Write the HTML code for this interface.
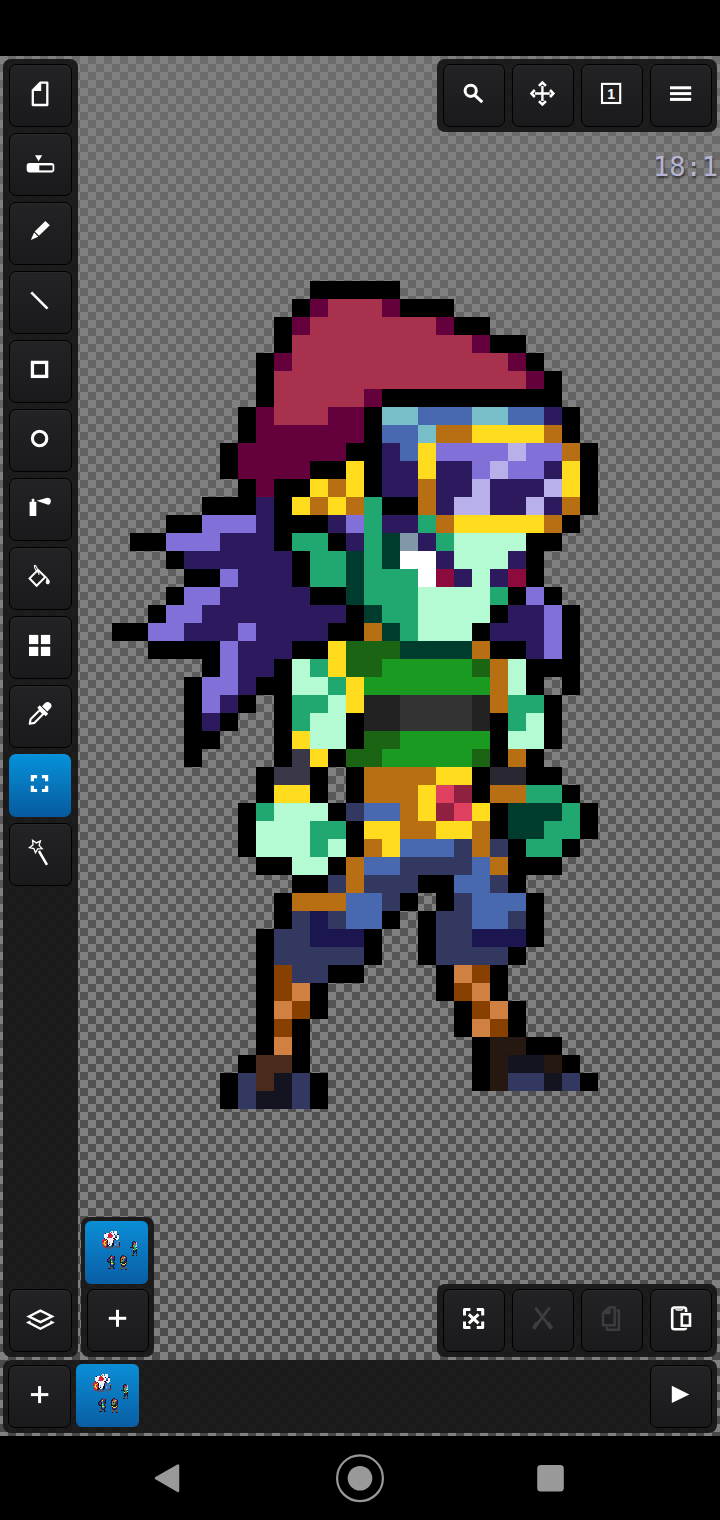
<!DOCTYPE html>
<html lang="en">
<head>
<meta charset="utf-8">
<title>Pixel editor</title>
<style>
html,body{margin:0;padding:0;background:#000;}
body{width:720px;height:1520px;position:relative;overflow:hidden;font-family:"Liberation Sans",sans-serif;}
.canvas{position:absolute;left:0;top:56px;width:720px;height:1380px;
  background:repeating-conic-gradient(transparent 0% 25%, #808080 0% 50%) 0 0/16px 16px, linear-gradient(#6c6c6c,#494949);}
.sprite{position:absolute;left:0;top:0;}
.panel{position:absolute;background:rgba(23,23,24,.95);border-radius:8px;}
.btn{position:absolute;width:61px;height:61px;border:1px solid #000;border-radius:7px;
  background:linear-gradient(#232325,#1a1a1c);box-shadow:inset 0 1px 0 rgba(255,255,255,.03);}
.btn.sel{background:linear-gradient(#0692da,#075a9e);border:0;}
.thumb{position:absolute;border-radius:6px;background:linear-gradient(#0a8ed6,#0a5ea4);}
.ico{position:absolute;left:0;top:0;}
.zoomtxt{position:absolute;left:653px;top:152px;font-family:"DejaVu Sans Mono","Liberation Mono",monospace;font-size:27px;line-height:30px;color:#b4b4d6;
  text-shadow:1px 2px 2px rgba(0,0,0,.55);white-space:nowrap;letter-spacing:0;}
.nav{position:absolute;left:0;top:1436px;width:720px;height:84px;background:#000;}
</style>
</head>
<body>
<div class="canvas"></div>
<svg class="sprite" width="720" height="1520" viewBox="0 0 720 1520" shape-rendering="crispEdges"><rect x="310" y="281" width="90" height="18" fill="#000000"/><rect x="292" y="299" width="18" height="18" fill="#000000"/><rect x="310" y="299" width="18" height="18" fill="#64003C"/><rect x="328" y="299" width="54" height="18" fill="#A8324E"/><rect x="382" y="299" width="18" height="18" fill="#64003C"/><rect x="400" y="299" width="54" height="18" fill="#000000"/><rect x="274" y="317" width="18" height="18" fill="#000000"/><rect x="292" y="317" width="18" height="18" fill="#64003C"/><rect x="310" y="317" width="126" height="18" fill="#A8324E"/><rect x="436" y="317" width="18" height="18" fill="#64003C"/><rect x="454" y="317" width="36" height="18" fill="#000000"/><rect x="274" y="335" width="18" height="18" fill="#000000"/><rect x="292" y="335" width="180" height="18" fill="#A8324E"/><rect x="472" y="335" width="18" height="18" fill="#64003C"/><rect x="490" y="335" width="36" height="18" fill="#000000"/><rect x="256" y="353" width="18" height="18" fill="#000000"/><rect x="274" y="353" width="18" height="18" fill="#64003C"/><rect x="292" y="353" width="216" height="18" fill="#A8324E"/><rect x="508" y="353" width="18" height="18" fill="#64003C"/><rect x="526" y="353" width="18" height="18" fill="#000000"/><rect x="256" y="371" width="18" height="18" fill="#000000"/><rect x="274" y="371" width="252" height="18" fill="#A8324E"/><rect x="526" y="371" width="18" height="18" fill="#64003C"/><rect x="544" y="371" width="18" height="18" fill="#000000"/><rect x="256" y="389" width="18" height="18" fill="#000000"/><rect x="274" y="389" width="90" height="18" fill="#A8324E"/><rect x="364" y="389" width="18" height="18" fill="#64003C"/><rect x="382" y="389" width="180" height="18" fill="#000000"/><rect x="238" y="407" width="18" height="18" fill="#000000"/><rect x="256" y="407" width="18" height="18" fill="#64003C"/><rect x="274" y="407" width="54" height="18" fill="#A8324E"/><rect x="328" y="407" width="36" height="18" fill="#64003C"/><rect x="364" y="407" width="18" height="18" fill="#000000"/><rect x="382" y="407" width="36" height="18" fill="#78BEC8"/><rect x="418" y="407" width="54" height="18" fill="#4868B0"/><rect x="472" y="407" width="36" height="18" fill="#78BEC8"/><rect x="508" y="407" width="36" height="18" fill="#4868B0"/><rect x="544" y="407" width="18" height="18" fill="#2D1A5E"/><rect x="562" y="407" width="18" height="18" fill="#000000"/><rect x="238" y="425" width="18" height="18" fill="#000000"/><rect x="256" y="425" width="108" height="18" fill="#64003C"/><rect x="364" y="425" width="18" height="18" fill="#000000"/><rect x="382" y="425" width="36" height="18" fill="#4868B0"/><rect x="418" y="425" width="18" height="18" fill="#78BEC8"/><rect x="436" y="425" width="36" height="18" fill="#B86F14"/><rect x="472" y="425" width="72" height="18" fill="#FFDC1E"/><rect x="544" y="425" width="18" height="18" fill="#B86F14"/><rect x="562" y="425" width="18" height="18" fill="#000000"/><rect x="220" y="443" width="18" height="18" fill="#000000"/><rect x="238" y="443" width="108" height="18" fill="#64003C"/><rect x="346" y="443" width="36" height="18" fill="#000000"/><rect x="382" y="443" width="18" height="18" fill="#2D1A5E"/><rect x="400" y="443" width="18" height="18" fill="#4868B0"/><rect x="418" y="443" width="18" height="18" fill="#FFDC1E"/><rect x="436" y="443" width="72" height="18" fill="#8070D8"/><rect x="508" y="443" width="18" height="18" fill="#B8B0E8"/><rect x="526" y="443" width="36" height="18" fill="#8070D8"/><rect x="562" y="443" width="18" height="18" fill="#B86F14"/><rect x="580" y="443" width="18" height="18" fill="#000000"/><rect x="220" y="461" width="18" height="18" fill="#000000"/><rect x="238" y="461" width="72" height="18" fill="#64003C"/><rect x="310" y="461" width="36" height="18" fill="#000000"/><rect x="346" y="461" width="18" height="18" fill="#FFDC1E"/><rect x="364" y="461" width="18" height="18" fill="#000000"/><rect x="382" y="461" width="36" height="18" fill="#2D1A5E"/><rect x="418" y="461" width="18" height="18" fill="#FFDC1E"/><rect x="436" y="461" width="36" height="18" fill="#2D1A5E"/><rect x="472" y="461" width="18" height="18" fill="#8070D8"/><rect x="490" y="461" width="18" height="18" fill="#B8B0E8"/><rect x="508" y="461" width="36" height="18" fill="#8070D8"/><rect x="544" y="461" width="18" height="18" fill="#2D1A5E"/><rect x="562" y="461" width="18" height="18" fill="#FFDC1E"/><rect x="580" y="461" width="18" height="18" fill="#000000"/><rect x="238" y="479" width="18" height="18" fill="#000000"/><rect x="256" y="479" width="18" height="18" fill="#64003C"/><rect x="274" y="479" width="36" height="18" fill="#000000"/><rect x="310" y="479" width="18" height="18" fill="#FFDC1E"/><rect x="328" y="479" width="18" height="18" fill="#B86F14"/><rect x="346" y="479" width="18" height="18" fill="#FFDC1E"/><rect x="364" y="479" width="18" height="18" fill="#000000"/><rect x="382" y="479" width="36" height="18" fill="#2D1A5E"/><rect x="418" y="479" width="18" height="18" fill="#B86F14"/><rect x="436" y="479" width="36" height="18" fill="#2D1A5E"/><rect x="472" y="479" width="18" height="18" fill="#B8B0E8"/><rect x="490" y="479" width="54" height="18" fill="#2D1A5E"/><rect x="544" y="479" width="18" height="18" fill="#B8B0E8"/><rect x="562" y="479" width="18" height="18" fill="#FFDC1E"/><rect x="580" y="479" width="18" height="18" fill="#000000"/><rect x="202" y="497" width="54" height="18" fill="#000000"/><rect x="256" y="497" width="18" height="18" fill="#2D1A5E"/><rect x="274" y="497" width="18" height="18" fill="#000000"/><rect x="292" y="497" width="18" height="18" fill="#FFDC1E"/><rect x="310" y="497" width="18" height="18" fill="#B86F14"/><rect x="328" y="497" width="18" height="18" fill="#FFDC1E"/><rect x="346" y="497" width="18" height="18" fill="#B86F14"/><rect x="364" y="497" width="18" height="18" fill="#20A870"/><rect x="382" y="497" width="36" height="18" fill="#000000"/><rect x="418" y="497" width="18" height="18" fill="#B86F14"/><rect x="436" y="497" width="18" height="18" fill="#2D1A5E"/><rect x="454" y="497" width="36" height="18" fill="#B8B0E8"/><rect x="490" y="497" width="36" height="18" fill="#2D1A5E"/><rect x="526" y="497" width="18" height="18" fill="#B8B0E8"/><rect x="544" y="497" width="18" height="18" fill="#2D1A5E"/><rect x="562" y="497" width="18" height="18" fill="#B86F14"/><rect x="580" y="497" width="18" height="18" fill="#000000"/><rect x="166" y="515" width="36" height="18" fill="#000000"/><rect x="202" y="515" width="54" height="18" fill="#8070D8"/><rect x="256" y="515" width="18" height="18" fill="#2D1A5E"/><rect x="274" y="515" width="54" height="18" fill="#000000"/><rect x="328" y="515" width="18" height="18" fill="#2D1A5E"/><rect x="346" y="515" width="18" height="18" fill="#8070D8"/><rect x="364" y="515" width="18" height="18" fill="#20A870"/><rect x="382" y="515" width="36" height="18" fill="#2D1A5E"/><rect x="418" y="515" width="18" height="18" fill="#20A870"/><rect x="436" y="515" width="18" height="18" fill="#B86F14"/><rect x="454" y="515" width="90" height="18" fill="#FFDC1E"/><rect x="544" y="515" width="18" height="18" fill="#B86F14"/><rect x="562" y="515" width="18" height="18" fill="#000000"/><rect x="130" y="533" width="36" height="18" fill="#000000"/><rect x="166" y="533" width="54" height="18" fill="#8070D8"/><rect x="220" y="533" width="54" height="18" fill="#2D1A5E"/><rect x="274" y="533" width="18" height="18" fill="#000000"/><rect x="292" y="533" width="36" height="18" fill="#20A870"/><rect x="328" y="533" width="18" height="18" fill="#000000"/><rect x="346" y="533" width="18" height="18" fill="#2D1A5E"/><rect x="364" y="533" width="18" height="18" fill="#20A870"/><rect x="382" y="533" width="18" height="18" fill="#003C2D"/><rect x="400" y="533" width="18" height="18" fill="#8098A8"/><rect x="418" y="533" width="18" height="18" fill="#2D1A5E"/><rect x="436" y="533" width="18" height="18" fill="#20A870"/><rect x="454" y="533" width="72" height="18" fill="#B4FAD2"/><rect x="526" y="533" width="36" height="18" fill="#000000"/><rect x="166" y="551" width="18" height="18" fill="#000000"/><rect x="184" y="551" width="108" height="18" fill="#2D1A5E"/><rect x="292" y="551" width="18" height="18" fill="#000000"/><rect x="310" y="551" width="36" height="18" fill="#20A870"/><rect x="346" y="551" width="18" height="18" fill="#003C2D"/><rect x="364" y="551" width="18" height="18" fill="#20A870"/><rect x="382" y="551" width="18" height="18" fill="#003C2D"/><rect x="400" y="551" width="36" height="18" fill="#FFFFFF"/><rect x="436" y="551" width="18" height="18" fill="#2D1A5E"/><rect x="454" y="551" width="54" height="18" fill="#B4FAD2"/><rect x="508" y="551" width="18" height="18" fill="#2D1A5E"/><rect x="526" y="551" width="18" height="18" fill="#000000"/><rect x="184" y="569" width="36" height="18" fill="#000000"/><rect x="220" y="569" width="18" height="18" fill="#8070D8"/><rect x="238" y="569" width="54" height="18" fill="#2D1A5E"/><rect x="292" y="569" width="18" height="18" fill="#000000"/><rect x="310" y="569" width="36" height="18" fill="#20A870"/><rect x="346" y="569" width="18" height="18" fill="#003C2D"/><rect x="364" y="569" width="54" height="18" fill="#20A870"/><rect x="418" y="569" width="18" height="18" fill="#FFFFFF"/><rect x="436" y="569" width="18" height="18" fill="#8C0A3C"/><rect x="454" y="569" width="18" height="18" fill="#2D1A5E"/><rect x="472" y="569" width="18" height="18" fill="#B4FAD2"/><rect x="490" y="569" width="18" height="18" fill="#2D1A5E"/><rect x="508" y="569" width="18" height="18" fill="#8C0A3C"/><rect x="526" y="569" width="18" height="18" fill="#000000"/><rect x="166" y="587" width="18" height="18" fill="#000000"/><rect x="184" y="587" width="36" height="18" fill="#8070D8"/><rect x="220" y="587" width="90" height="18" fill="#2D1A5E"/><rect x="310" y="587" width="36" height="18" fill="#000000"/><rect x="346" y="587" width="18" height="18" fill="#003C2D"/><rect x="364" y="587" width="54" height="18" fill="#20A870"/><rect x="418" y="587" width="72" height="18" fill="#B4FAD2"/><rect x="490" y="587" width="18" height="18" fill="#20A870"/><rect x="508" y="587" width="18" height="18" fill="#000000"/><rect x="526" y="587" width="18" height="18" fill="#8070D8"/><rect x="544" y="587" width="18" height="18" fill="#000000"/><rect x="148" y="605" width="18" height="18" fill="#000000"/><rect x="166" y="605" width="36" height="18" fill="#8070D8"/><rect x="202" y="605" width="144" height="18" fill="#2D1A5E"/><rect x="346" y="605" width="18" height="18" fill="#000000"/><rect x="364" y="605" width="18" height="18" fill="#003C2D"/><rect x="382" y="605" width="36" height="18" fill="#20A870"/><rect x="418" y="605" width="72" height="18" fill="#B4FAD2"/><rect x="490" y="605" width="18" height="18" fill="#000000"/><rect x="508" y="605" width="36" height="18" fill="#2D1A5E"/><rect x="544" y="605" width="18" height="18" fill="#8070D8"/><rect x="562" y="605" width="18" height="18" fill="#000000"/><rect x="112" y="623" width="36" height="18" fill="#000000"/><rect x="148" y="623" width="36" height="18" fill="#8070D8"/><rect x="184" y="623" width="54" height="18" fill="#2D1A5E"/><rect x="238" y="623" width="18" height="18" fill="#8070D8"/><rect x="256" y="623" width="72" height="18" fill="#2D1A5E"/><rect x="328" y="623" width="36" height="18" fill="#000000"/><rect x="364" y="623" width="18" height="18" fill="#B86F14"/><rect x="382" y="623" width="18" height="18" fill="#003C2D"/><rect x="400" y="623" width="18" height="18" fill="#20A870"/><rect x="418" y="623" width="54" height="18" fill="#B4FAD2"/><rect x="472" y="623" width="18" height="18" fill="#000000"/><rect x="490" y="623" width="54" height="18" fill="#2D1A5E"/><rect x="544" y="623" width="18" height="18" fill="#8070D8"/><rect x="562" y="623" width="18" height="18" fill="#000000"/><rect x="148" y="641" width="72" height="18" fill="#000000"/><rect x="220" y="641" width="18" height="18" fill="#8070D8"/><rect x="238" y="641" width="54" height="18" fill="#2D1A5E"/><rect x="292" y="641" width="36" height="18" fill="#000000"/><rect x="328" y="641" width="18" height="18" fill="#FFDC1E"/><rect x="346" y="641" width="54" height="18" fill="#1A6414"/><rect x="400" y="641" width="72" height="18" fill="#003C2D"/><rect x="472" y="641" width="18" height="18" fill="#B86F14"/><rect x="490" y="641" width="36" height="18" fill="#000000"/><rect x="526" y="641" width="18" height="18" fill="#2D1A5E"/><rect x="544" y="641" width="18" height="18" fill="#8070D8"/><rect x="562" y="641" width="18" height="18" fill="#000000"/><rect x="202" y="659" width="18" height="18" fill="#000000"/><rect x="220" y="659" width="18" height="18" fill="#8070D8"/><rect x="238" y="659" width="36" height="18" fill="#2D1A5E"/><rect x="274" y="659" width="18" height="18" fill="#000000"/><rect x="292" y="659" width="18" height="18" fill="#B4FAD2"/><rect x="310" y="659" width="18" height="18" fill="#20A870"/><rect x="328" y="659" width="18" height="18" fill="#FFDC1E"/><rect x="346" y="659" width="36" height="18" fill="#1A6414"/><rect x="382" y="659" width="90" height="18" fill="#1A9A20"/><rect x="472" y="659" width="18" height="18" fill="#1A6414"/><rect x="490" y="659" width="18" height="18" fill="#B86F14"/><rect x="508" y="659" width="18" height="18" fill="#B4FAD2"/><rect x="526" y="659" width="54" height="18" fill="#000000"/><rect x="184" y="677" width="18" height="18" fill="#000000"/><rect x="202" y="677" width="36" height="18" fill="#8070D8"/><rect x="238" y="677" width="18" height="18" fill="#2D1A5E"/><rect x="256" y="677" width="36" height="18" fill="#000000"/><rect x="292" y="677" width="36" height="18" fill="#B4FAD2"/><rect x="328" y="677" width="18" height="18" fill="#20A870"/><rect x="346" y="677" width="18" height="18" fill="#FFDC1E"/><rect x="364" y="677" width="126" height="18" fill="#1A9A20"/><rect x="490" y="677" width="18" height="18" fill="#B86F14"/><rect x="508" y="677" width="18" height="18" fill="#B4FAD2"/><rect x="526" y="677" width="18" height="18" fill="#000000"/><rect x="562" y="677" width="18" height="18" fill="#000000"/><rect x="184" y="695" width="18" height="18" fill="#000000"/><rect x="202" y="695" width="18" height="18" fill="#8070D8"/><rect x="220" y="695" width="18" height="18" fill="#2D1A5E"/><rect x="238" y="695" width="18" height="18" fill="#000000"/><rect x="274" y="695" width="18" height="18" fill="#000000"/><rect x="292" y="695" width="36" height="18" fill="#20A870"/><rect x="328" y="695" width="18" height="18" fill="#B4FAD2"/><rect x="346" y="695" width="18" height="18" fill="#FFDC1E"/><rect x="364" y="695" width="36" height="18" fill="#222222"/><rect x="400" y="695" width="72" height="18" fill="#333333"/><rect x="472" y="695" width="18" height="18" fill="#222222"/><rect x="490" y="695" width="18" height="18" fill="#B86F14"/><rect x="508" y="695" width="36" height="18" fill="#20A870"/><rect x="544" y="695" width="18" height="18" fill="#000000"/><rect x="184" y="713" width="18" height="18" fill="#000000"/><rect x="202" y="713" width="18" height="18" fill="#2D1A5E"/><rect x="220" y="713" width="18" height="18" fill="#000000"/><rect x="274" y="713" width="18" height="18" fill="#000000"/><rect x="292" y="713" width="18" height="18" fill="#20A870"/><rect x="310" y="713" width="36" height="18" fill="#B4FAD2"/><rect x="346" y="713" width="18" height="18" fill="#000000"/><rect x="364" y="713" width="36" height="18" fill="#222222"/><rect x="400" y="713" width="72" height="18" fill="#333333"/><rect x="472" y="713" width="18" height="18" fill="#222222"/><rect x="490" y="713" width="18" height="18" fill="#000000"/><rect x="508" y="713" width="18" height="18" fill="#20A870"/><rect x="526" y="713" width="18" height="18" fill="#B4FAD2"/><rect x="544" y="713" width="18" height="18" fill="#000000"/><rect x="184" y="731" width="36" height="18" fill="#000000"/><rect x="274" y="731" width="18" height="18" fill="#000000"/><rect x="292" y="731" width="18" height="18" fill="#FFDC1E"/><rect x="310" y="731" width="36" height="18" fill="#B4FAD2"/><rect x="346" y="731" width="18" height="18" fill="#000000"/><rect x="364" y="731" width="36" height="18" fill="#1A6414"/><rect x="400" y="731" width="90" height="18" fill="#1A9A20"/><rect x="490" y="731" width="18" height="18" fill="#000000"/><rect x="508" y="731" width="36" height="18" fill="#B4FAD2"/><rect x="544" y="731" width="18" height="18" fill="#000000"/><rect x="184" y="749" width="18" height="18" fill="#000000"/><rect x="274" y="749" width="18" height="18" fill="#000000"/><rect x="292" y="749" width="18" height="18" fill="#3A3848"/><rect x="310" y="749" width="18" height="18" fill="#FFDC1E"/><rect x="328" y="749" width="18" height="18" fill="#000000"/><rect x="346" y="749" width="36" height="18" fill="#1A6414"/><rect x="382" y="749" width="90" height="18" fill="#1A9A20"/><rect x="472" y="749" width="18" height="18" fill="#1A6414"/><rect x="490" y="749" width="18" height="18" fill="#000000"/><rect x="508" y="749" width="18" height="18" fill="#B86F14"/><rect x="526" y="749" width="18" height="18" fill="#000000"/><rect x="256" y="767" width="18" height="18" fill="#000000"/><rect x="274" y="767" width="36" height="18" fill="#3A3848"/><rect x="310" y="767" width="18" height="18" fill="#000000"/><rect x="346" y="767" width="18" height="18" fill="#000000"/><rect x="364" y="767" width="72" height="18" fill="#B86F14"/><rect x="436" y="767" width="36" height="18" fill="#FFDC1E"/><rect x="472" y="767" width="18" height="18" fill="#000000"/><rect x="490" y="767" width="36" height="18" fill="#282630"/><rect x="526" y="767" width="36" height="18" fill="#000000"/><rect x="256" y="785" width="18" height="18" fill="#000000"/><rect x="274" y="785" width="36" height="18" fill="#FFDC1E"/><rect x="310" y="785" width="18" height="18" fill="#000000"/><rect x="346" y="785" width="18" height="18" fill="#000000"/><rect x="364" y="785" width="54" height="18" fill="#B86F14"/><rect x="418" y="785" width="18" height="18" fill="#FFDC1E"/><rect x="436" y="785" width="18" height="18" fill="#E04060"/><rect x="454" y="785" width="18" height="18" fill="#902040"/><rect x="472" y="785" width="18" height="18" fill="#000000"/><rect x="490" y="785" width="36" height="18" fill="#B86F14"/><rect x="526" y="785" width="36" height="18" fill="#20A870"/><rect x="562" y="785" width="18" height="18" fill="#000000"/><rect x="238" y="803" width="18" height="18" fill="#000000"/><rect x="256" y="803" width="18" height="18" fill="#20A870"/><rect x="274" y="803" width="54" height="18" fill="#B4FAD2"/><rect x="328" y="803" width="18" height="18" fill="#000000"/><rect x="346" y="803" width="18" height="18" fill="#323860"/><rect x="364" y="803" width="36" height="18" fill="#4868B0"/><rect x="400" y="803" width="18" height="18" fill="#B86F14"/><rect x="418" y="803" width="18" height="18" fill="#FFDC1E"/><rect x="436" y="803" width="18" height="18" fill="#902040"/><rect x="454" y="803" width="18" height="18" fill="#E04060"/><rect x="472" y="803" width="18" height="18" fill="#FFDC1E"/><rect x="490" y="803" width="18" height="18" fill="#000000"/><rect x="508" y="803" width="54" height="18" fill="#003C2D"/><rect x="562" y="803" width="18" height="18" fill="#20A870"/><rect x="580" y="803" width="18" height="18" fill="#000000"/><rect x="238" y="821" width="18" height="18" fill="#000000"/><rect x="256" y="821" width="54" height="18" fill="#B4FAD2"/><rect x="310" y="821" width="36" height="18" fill="#20A870"/><rect x="346" y="821" width="18" height="18" fill="#000000"/><rect x="364" y="821" width="36" height="18" fill="#FFDC1E"/><rect x="400" y="821" width="36" height="18" fill="#B86F14"/><rect x="436" y="821" width="36" height="18" fill="#FFDC1E"/><rect x="472" y="821" width="18" height="18" fill="#B86F14"/><rect x="490" y="821" width="18" height="18" fill="#000000"/><rect x="508" y="821" width="36" height="18" fill="#003C2D"/><rect x="544" y="821" width="36" height="18" fill="#20A870"/><rect x="580" y="821" width="18" height="18" fill="#000000"/><rect x="238" y="839" width="18" height="18" fill="#000000"/><rect x="256" y="839" width="54" height="18" fill="#B4FAD2"/><rect x="310" y="839" width="18" height="18" fill="#20A870"/><rect x="328" y="839" width="18" height="18" fill="#B4FAD2"/><rect x="346" y="839" width="18" height="18" fill="#000000"/><rect x="364" y="839" width="18" height="18" fill="#B86F14"/><rect x="382" y="839" width="18" height="18" fill="#FFDC1E"/><rect x="400" y="839" width="54" height="18" fill="#4868B0"/><rect x="454" y="839" width="18" height="18" fill="#323860"/><rect x="472" y="839" width="18" height="18" fill="#B86F14"/><rect x="490" y="839" width="18" height="18" fill="#323860"/><rect x="508" y="839" width="18" height="18" fill="#000000"/><rect x="526" y="839" width="36" height="18" fill="#20A870"/><rect x="562" y="839" width="18" height="18" fill="#000000"/><rect x="256" y="857" width="36" height="18" fill="#000000"/><rect x="292" y="857" width="36" height="18" fill="#B4FAD2"/><rect x="328" y="857" width="18" height="18" fill="#000000"/><rect x="346" y="857" width="18" height="18" fill="#B86F14"/><rect x="364" y="857" width="36" height="18" fill="#4868B0"/><rect x="400" y="857" width="72" height="18" fill="#323860"/><rect x="472" y="857" width="18" height="18" fill="#4868B0"/><rect x="490" y="857" width="18" height="18" fill="#B86F14"/><rect x="508" y="857" width="54" height="18" fill="#000000"/><rect x="292" y="875" width="36" height="18" fill="#000000"/><rect x="328" y="875" width="18" height="18" fill="#323860"/><rect x="346" y="875" width="18" height="18" fill="#B86F14"/><rect x="364" y="875" width="54" height="18" fill="#323860"/><rect x="418" y="875" width="36" height="18" fill="#000000"/><rect x="454" y="875" width="36" height="18" fill="#4868B0"/><rect x="490" y="875" width="18" height="18" fill="#323860"/><rect x="508" y="875" width="18" height="18" fill="#000000"/><rect x="274" y="893" width="18" height="18" fill="#000000"/><rect x="292" y="893" width="54" height="18" fill="#B86F14"/><rect x="346" y="893" width="36" height="18" fill="#4868B0"/><rect x="382" y="893" width="18" height="18" fill="#323860"/><rect x="400" y="893" width="18" height="18" fill="#000000"/><rect x="436" y="893" width="18" height="18" fill="#000000"/><rect x="454" y="893" width="18" height="18" fill="#323860"/><rect x="472" y="893" width="54" height="18" fill="#4868B0"/><rect x="526" y="893" width="18" height="18" fill="#000000"/><rect x="274" y="911" width="18" height="18" fill="#000000"/><rect x="292" y="911" width="18" height="18" fill="#323860"/><rect x="310" y="911" width="18" height="18" fill="#1C1650"/><rect x="328" y="911" width="18" height="18" fill="#323860"/><rect x="346" y="911" width="36" height="18" fill="#4868B0"/><rect x="382" y="911" width="18" height="18" fill="#000000"/><rect x="418" y="911" width="18" height="18" fill="#000000"/><rect x="436" y="911" width="36" height="18" fill="#323860"/><rect x="472" y="911" width="36" height="18" fill="#4868B0"/><rect x="508" y="911" width="18" height="18" fill="#323860"/><rect x="526" y="911" width="18" height="18" fill="#000000"/><rect x="256" y="929" width="18" height="18" fill="#000000"/><rect x="274" y="929" width="36" height="18" fill="#323860"/><rect x="310" y="929" width="54" height="18" fill="#1C1650"/><rect x="364" y="929" width="18" height="18" fill="#000000"/><rect x="418" y="929" width="18" height="18" fill="#000000"/><rect x="436" y="929" width="36" height="18" fill="#323860"/><rect x="472" y="929" width="54" height="18" fill="#1C1650"/><rect x="526" y="929" width="18" height="18" fill="#000000"/><rect x="256" y="947" width="18" height="18" fill="#000000"/><rect x="274" y="947" width="90" height="18" fill="#323860"/><rect x="364" y="947" width="18" height="18" fill="#000000"/><rect x="418" y="947" width="18" height="18" fill="#000000"/><rect x="436" y="947" width="72" height="18" fill="#323860"/><rect x="508" y="947" width="18" height="18" fill="#000000"/><rect x="256" y="965" width="18" height="18" fill="#000000"/><rect x="274" y="965" width="18" height="18" fill="#884000"/><rect x="292" y="965" width="36" height="18" fill="#323860"/><rect x="328" y="965" width="36" height="18" fill="#000000"/><rect x="436" y="965" width="18" height="18" fill="#000000"/><rect x="454" y="965" width="18" height="18" fill="#D08040"/><rect x="472" y="965" width="18" height="18" fill="#884000"/><rect x="490" y="965" width="18" height="18" fill="#000000"/><rect x="256" y="983" width="18" height="18" fill="#000000"/><rect x="274" y="983" width="18" height="18" fill="#884000"/><rect x="292" y="983" width="18" height="18" fill="#D08040"/><rect x="310" y="983" width="18" height="18" fill="#000000"/><rect x="436" y="983" width="18" height="18" fill="#000000"/><rect x="454" y="983" width="18" height="18" fill="#884000"/><rect x="472" y="983" width="18" height="18" fill="#D08040"/><rect x="490" y="983" width="18" height="18" fill="#000000"/><rect x="256" y="1001" width="18" height="18" fill="#000000"/><rect x="274" y="1001" width="18" height="18" fill="#D08040"/><rect x="292" y="1001" width="18" height="18" fill="#884000"/><rect x="310" y="1001" width="18" height="18" fill="#000000"/><rect x="454" y="1001" width="18" height="18" fill="#000000"/><rect x="472" y="1001" width="18" height="18" fill="#884000"/><rect x="490" y="1001" width="18" height="18" fill="#D08040"/><rect x="508" y="1001" width="18" height="18" fill="#000000"/><rect x="256" y="1019" width="18" height="18" fill="#000000"/><rect x="274" y="1019" width="18" height="18" fill="#884000"/><rect x="292" y="1019" width="18" height="18" fill="#000000"/><rect x="454" y="1019" width="18" height="18" fill="#000000"/><rect x="472" y="1019" width="18" height="18" fill="#D08040"/><rect x="490" y="1019" width="18" height="18" fill="#884000"/><rect x="508" y="1019" width="18" height="18" fill="#000000"/><rect x="256" y="1037" width="18" height="18" fill="#000000"/><rect x="274" y="1037" width="18" height="18" fill="#D08040"/><rect x="292" y="1037" width="18" height="18" fill="#000000"/><rect x="472" y="1037" width="18" height="18" fill="#000000"/><rect x="490" y="1037" width="36" height="18" fill="#241810"/><rect x="526" y="1037" width="36" height="18" fill="#000000"/><rect x="238" y="1055" width="18" height="18" fill="#000000"/><rect x="256" y="1055" width="36" height="18" fill="#4A2A1A"/><rect x="292" y="1055" width="18" height="18" fill="#000000"/><rect x="472" y="1055" width="18" height="18" fill="#000000"/><rect x="490" y="1055" width="18" height="18" fill="#241810"/><rect x="508" y="1055" width="36" height="18" fill="#141420"/><rect x="544" y="1055" width="18" height="18" fill="#241810"/><rect x="562" y="1055" width="18" height="18" fill="#000000"/><rect x="220" y="1073" width="18" height="18" fill="#000000"/><rect x="238" y="1073" width="18" height="18" fill="#323860"/><rect x="256" y="1073" width="18" height="18" fill="#4A2A1A"/><rect x="274" y="1073" width="18" height="18" fill="#141420"/><rect x="292" y="1073" width="18" height="18" fill="#323860"/><rect x="310" y="1073" width="18" height="18" fill="#000000"/><rect x="472" y="1073" width="18" height="18" fill="#000000"/><rect x="490" y="1073" width="18" height="18" fill="#241810"/><rect x="508" y="1073" width="36" height="18" fill="#323860"/><rect x="544" y="1073" width="18" height="18" fill="#141420"/><rect x="562" y="1073" width="18" height="18" fill="#323860"/><rect x="580" y="1073" width="18" height="18" fill="#000000"/><rect x="220" y="1091" width="18" height="18" fill="#000000"/><rect x="238" y="1091" width="18" height="18" fill="#323860"/><rect x="256" y="1091" width="36" height="18" fill="#141420"/><rect x="292" y="1091" width="18" height="18" fill="#323860"/><rect x="310" y="1091" width="18" height="18" fill="#000000"/></svg>
<div class="zoomtxt">18:1</div>

<!-- left tool panel -->
<div class="panel" style="left:3px;top:59px;width:75px;height:1298px;"></div>
<!-- top right panel -->
<div class="panel" style="left:437px;top:59px;width:280px;height:72.7px;"></div>
<!-- bottom right panel -->
<div class="panel" style="left:437px;top:1284px;width:280px;height:73px;"></div>
<!-- layer panel -->
<div class="panel" style="left:81px;top:1217px;width:73px;height:140px;"></div>
<!-- bottom bar -->
<div class="panel" style="left:3px;top:1360px;width:714px;height:72.5px;"></div>

<div class="btn" style="left:9px;top:64px;width:60.5px;height:60.5px"></div>
<div class="btn" style="left:9px;top:133px;width:60.5px;height:60.5px"></div>
<div class="btn" style="left:9px;top:202px;width:60.5px;height:60.5px"></div>
<div class="btn" style="left:9px;top:271px;width:60.5px;height:60.5px"></div>
<div class="btn" style="left:9px;top:340px;width:60.5px;height:60.5px"></div>
<div class="btn" style="left:9px;top:409px;width:60.5px;height:60.5px"></div>
<div class="btn" style="left:9px;top:478px;width:60.5px;height:60.5px"></div>
<div class="btn" style="left:9px;top:547px;width:60.5px;height:60.5px"></div>
<div class="btn" style="left:9px;top:616px;width:60.5px;height:60.5px"></div>
<div class="btn" style="left:9px;top:685px;width:60.5px;height:60.5px"></div>
<div class="btn sel" style="left:8.5px;top:753.8px;width:62.8px;height:63px"></div>
<div class="btn" style="left:9px;top:823px;width:60.5px;height:60.5px"></div>
<div class="btn" style="left:9px;top:1289.3px;width:60.5px;height:60.5px"></div>
<div class="btn" style="left:442.5px;top:64px;width:60.5px;height:60.5px"></div>
<div class="btn" style="left:442.5px;top:1289.3px;width:60.5px;height:60.5px"></div>
<div class="btn" style="left:511.5px;top:64px;width:60.5px;height:60.5px"></div>
<div class="btn" style="left:511.5px;top:1289.3px;width:60.5px;height:60.5px"></div>
<div class="btn" style="left:580.5px;top:64px;width:60.5px;height:60.5px"></div>
<div class="btn" style="left:580.5px;top:1289.3px;width:60.5px;height:60.5px"></div>
<div class="btn" style="left:649.5px;top:64px;width:60.5px;height:60.5px"></div>
<div class="btn" style="left:649.5px;top:1289.3px;width:60.5px;height:60.5px"></div>
<div class="btn" style="left:86.5px;top:1289.3px;width:60.5px;height:60.5px"></div>
<div class="btn" style="left:8px;top:1365.2px;width:61px;height:60.5px"></div>
<div class="btn" style="left:649.5px;top:1365px;width:60.5px;height:60.5px"></div>
<div class="thumb" style="left:85px;top:1221px;width:63px;height:63px"></div>
<div class="thumb" style="left:76px;top:1363.7px;width:63.2px;height:63.8px"></div>

<svg class="ico" width="720" height="1520" viewBox="0 0 720 1520">
<path d="M32.8 90.2 L40.2 82.7 H47.3 V105 H32.8 Z" fill="none" stroke="#fff" stroke-width="2.3" stroke-linejoin="round"/>
<path d="M32.3 91 L41.2 82 V91 Z" fill="#fff"/>
<path d="M35 155.3 H42.2 L38.6 161.2 Z" fill="#fff"/>
<rect x="26.7" y="162.9" width="27.6" height="9.5" rx="2.8" fill="#fff"/>
<rect x="39.3" y="165.4" width="13.2" height="5" fill="#1d1d1f"/>
<path d="M45.4 220.9 L49.8 225.3 L39 235.8 L34.7 231.5 Z" fill="#fff"/>
<path d="M34.1 232.5 L38.2 236.7 L30.8 240 Z" fill="#fff"/>
<path d="M31.3 292.4 L47.5 308.7" stroke="#fff" stroke-width="2.6" fill="none"/>
<rect x="32.45" y="362.4" width="14.2" height="14" fill="none" stroke="#fff" stroke-width="3.3"/>
<circle cx="39.6" cy="438.5" r="7.2" fill="none" stroke="#fff" stroke-width="3.1"/>
<rect x="29.6" y="501.7" width="6.7" height="14.4" rx="0.6" fill="#fff"/>
<rect x="31.7" y="498.8" width="2.6" height="3.2" rx="0.8" fill="#fff"/>
<path d="M36.5 500.8 L47.2 497.7 Q51 497.6 50.8 501.3 Q50.4 504.8 48 504.8 Z" fill="#fff"/>
<path d="M29.6 578.4 L38 569.9 L45.3 577 L36.6 585.8 Z" fill="none" stroke="#fff" stroke-width="2" stroke-linejoin="miter"/>
<path d="M37.4 572.5 Q33.5 567 34.6 565.4 Q36.3 564.6 39.2 574.8" fill="none" stroke="#fff" stroke-width="1.1"/>
<path d="M45.3 576.8 L47 578.3" stroke="#fff" stroke-width="1.2"/>
<path d="M46.9 577.6 Q50.2 580.6 49.7 582 A2 2 0 1 1 46 581.2 Q46.2 579.5 46.9 577.6 Z" fill="#fff"/>
<rect x="29" y="634.9" width="9.3" height="9.2" fill="#fff"/>
<rect x="40.9" y="634.9" width="9.3" height="9.2" fill="#fff"/>
<rect x="29" y="646.8" width="9.3" height="9.2" fill="#fff"/>
<rect x="40.9" y="646.8" width="9.3" height="9.2" fill="#fff"/>
<g transform="translate(28.9 724.6) rotate(-45)"><path d="M1.2 0 L5 -2.6 H18 V2.6 H5 Z" fill="none" stroke="#fff" stroke-width="2.1" stroke-linejoin="round"/><rect x="17.8" y="-6" width="3.5" height="12" fill="#fff"/><path d="M22.3 -3.8 H26.4 A3.8 3.8 0 0 1 26.4 3.8 H22.3 Z" fill="#fff"/></g>
<path fill="#fff" d="M30.8 775 h6.3 v3.2 h-3.1 v3.1 h-3.2 Z"/>
<path fill="#fff" d="M48.2 775 h-6.3 v3.2 h3.1 v3.1 h3.2 Z"/>
<path fill="#fff" d="M30.8 792.1 h6.3 v-3.2 h-3.1 v-3.1 h-3.2 Z"/>
<path fill="#fff" d="M48.2 792.1 h-6.3 v-3.2 h3.1 v-3.1 h3.2 Z"/>
<polygon points="32.55,840.36 36.28,842.91 40.40,841.04 39.12,845.38 42.17,848.72 37.65,848.84 35.42,852.77 33.90,848.52 29.47,847.61 33.05,844.85" fill="none" stroke="#fff" stroke-width="1.3" stroke-linejoin="miter"/>
<path d="M38.9 851 L47 864.8" stroke="#fff" stroke-width="2.5"/>
<path d="M28.9 1316.5 L40.4 1310.6 L52 1316.5 L40.4 1322.2 Z" fill="none" stroke="#fff" stroke-width="2.4" stroke-linejoin="miter"/>
<path d="M30.6 1321.6 L28.6 1322.6 L40.4 1328.7 L52.2 1322.6 L50.2 1321.6" fill="none" stroke="#fff" stroke-width="2.4" stroke-linejoin="miter"/>
<rect x="108.8" y="1316.8" width="17.4" height="3" fill="#fff"/>
<rect x="116" y="1309.8" width="3" height="17" fill="#fff"/>
<rect x="30.9" y="1393.1" width="17.4" height="3" fill="#fff"/>
<rect x="38.1" y="1386.1" width="3" height="17" fill="#fff"/>
<circle cx="470.7" cy="90.8" r="5.6" fill="none" stroke="#fff" stroke-width="3"/>
<path d="M474.9 95.4 L482.3 102.2" stroke="#fff" stroke-width="3"/>
<path d="M542.4 86.1 V100.9 M535 93.5 H549.8" stroke="#fff" stroke-width="2.4" fill="none"/>
<path d="M538.9 85.9 L542.4 82.6 L545.9 85.9 M538.9 101.1 L542.4 104.4 L545.9 101.1 M534.8 90 L531.5 93.5 L534.8 97 M550 90 L553.3 93.5 L550 97" stroke="#fff" stroke-width="2.6" fill="none" stroke-linejoin="miter"/>
<rect x="602" y="83.9" width="18.2" height="19.1" fill="none" stroke="#fff" stroke-width="2.1"/>
<text x="611.1" y="98.8" style="font-family:'Liberation Sans',sans-serif;font-weight:bold" font-size="14" fill="#fff" text-anchor="middle">1</text>
<rect x="670" y="86.3" width="21.2" height="3" fill="#fff"/>
<rect x="670" y="92.1" width="21.2" height="3" fill="#fff"/>
<rect x="670" y="97.9" width="21.2" height="3" fill="#fff"/>
<g fill="none" stroke="#fff" stroke-width="3" stroke-linejoin="round">
<path d="M464.5 1315.4 V1309.5 H470.4"/>
<path d="M482.7 1315.4 V1309.5 H476.8"/>
<path d="M464.5 1321.6 V1327.5 H470.4"/>
<path d="M482.7 1321.6 V1327.5 H476.8"/>
</g>
<path d="M468.8 1314.3 L478.5 1323.3 M478.5 1314.3 L468.8 1323.3" stroke="#fff" stroke-width="3"/>
<path d="M535.3 1307.6 L551.4 1328.6 M549.5 1307.6 L533.7 1328.6" stroke="#3e3e40" stroke-width="2.6" fill="none"/>
<path d="M537.5 1322.5 L533.5 1328.6 M547.5 1322.5 L551.5 1328.6" stroke="#3e3e40" stroke-width="4" fill="none"/>
<path d="M603 1313 L609.5 1307.2 H614.7 V1325.2 H603 Z" fill="none" stroke="#3c3c3e" stroke-width="2.5" stroke-linejoin="round"/>
<path d="M603 1314.3 L610.6 1307 V1314.3 Z" fill="#3c3c3e"/>
<path d="M616.5 1310.5 H618.9 V1329.8 H607 V1327" fill="none" stroke="#3c3c3e" stroke-width="2.5" stroke-linejoin="round"/>
<rect x="672.2" y="1307.5" width="13.9" height="21.7" rx="2.2" fill="none" stroke="#fff" stroke-width="2.6"/>
<path d="M675.6 1308.6 Q676 1310 677.3 1310 H681.2 Q682.4 1310 682.8 1308.6" fill="none" stroke="#fff" stroke-width="1.4"/>
<rect x="679.6" y="1312" width="12.6" height="15.8" fill="#1c1c1e"/>
<rect x="681.8" y="1314.2" width="8.2" height="11.4" fill="none" stroke="#fff" stroke-width="2.6"/>
<path d="M671.8 1385.8 L689.3 1394.4 L671.8 1403 Z" fill="#fff"/>
<g shape-rendering="crispEdges"><rect x="111" y="1231" width="2" height="1" fill="#f2f2f6"/><rect x="114" y="1231" width="3" height="1" fill="#f2f2f6"/><rect x="110" y="1232" width="1" height="1" fill="#f2f2f6"/><rect x="111" y="1232" width="1" height="1" fill="#d02838"/><rect x="112" y="1232" width="1" height="1" fill="#f2f2f6"/><rect x="114" y="1232" width="3" height="1" fill="#f2f2f6"/><rect x="105" y="1233" width="1" height="1" fill="#181828"/><rect x="106" y="1233" width="3" height="1" fill="#f2f2f6"/><rect x="109" y="1233" width="2" height="1" fill="#d02838"/><rect x="111" y="1233" width="6" height="1" fill="#f2f2f6"/><rect x="104" y="1234" width="4" height="1" fill="#f2f2f6"/><rect x="108" y="1234" width="4" height="1" fill="#d02838"/><rect x="112" y="1234" width="2" height="1" fill="#f2f2f6"/><rect x="114" y="1234" width="1" height="1" fill="#181828"/><rect x="115" y="1234" width="2" height="1" fill="#f2f2f6"/><rect x="117" y="1234" width="2" height="1" fill="#181828"/><rect x="104" y="1235" width="4" height="1" fill="#f2f2f6"/><rect x="108" y="1235" width="5" height="1" fill="#d02838"/><rect x="113" y="1235" width="2" height="1" fill="#f2f2f6"/><rect x="115" y="1235" width="2" height="1" fill="#2f7cc8"/><rect x="117" y="1235" width="2" height="1" fill="#f2f2f6"/><rect x="104" y="1236" width="4" height="1" fill="#f2f2f6"/><rect x="108" y="1236" width="5" height="1" fill="#d02838"/><rect x="113" y="1236" width="2" height="1" fill="#f2f2f6"/><rect x="115" y="1236" width="2" height="1" fill="#2f7cc8"/><rect x="117" y="1236" width="2" height="1" fill="#f2f2f6"/><rect x="104" y="1237" width="3" height="1" fill="#f2f2f6"/><rect x="108" y="1237" width="4" height="1" fill="#d02838"/><rect x="112" y="1237" width="3" height="1" fill="#f2f2f6"/><rect x="115" y="1237" width="2" height="1" fill="#181828"/><rect x="117" y="1237" width="2" height="1" fill="#f2f2f6"/><rect x="104" y="1238" width="1" height="1" fill="#181828"/><rect x="105" y="1238" width="8" height="1" fill="#f2f2f6"/><rect x="113" y="1238" width="2" height="1" fill="#181828"/><rect x="115" y="1238" width="4" height="1" fill="#f2f2f6"/><rect x="103" y="1239" width="3" height="1" fill="#d02838"/><rect x="106" y="1239" width="1" height="1" fill="#181828"/><rect x="107" y="1239" width="7" height="1" fill="#f2f2f6"/><rect x="114" y="1239" width="2" height="1" fill="#181828"/><rect x="116" y="1239" width="2" height="1" fill="#f2f2f6"/><rect x="102" y="1240" width="4" height="1" fill="#d02838"/><rect x="106" y="1240" width="1" height="1" fill="#ffd428"/><rect x="107" y="1240" width="1" height="1" fill="#181828"/><rect x="108" y="1240" width="5" height="1" fill="#f2f2f6"/><rect x="113" y="1240" width="1" height="1" fill="#a01828"/><rect x="102" y="1241" width="2" height="1" fill="#d02838"/><rect x="104" y="1241" width="2" height="1" fill="#ffd428"/><rect x="106" y="1241" width="1" height="1" fill="#d02838"/><rect x="107" y="1241" width="1" height="1" fill="#181828"/><rect x="108" y="1241" width="5" height="1" fill="#f2f2f6"/><rect x="113" y="1241" width="1" height="1" fill="#181828"/><rect x="115" y="1241" width="3" height="1" fill="#2f7cc8"/><rect x="118" y="1241" width="2" height="1" fill="#c07828"/><rect x="102" y="1242" width="2" height="1" fill="#d02838"/><rect x="104" y="1242" width="1" height="1" fill="#ffd428"/><rect x="105" y="1242" width="2" height="1" fill="#d02838"/><rect x="107" y="1242" width="1" height="1" fill="#181828"/><rect x="108" y="1242" width="1" height="1" fill="#f2f2f6"/><rect x="109" y="1242" width="1" height="1" fill="#8ab8e4"/><rect x="110" y="1242" width="3" height="1" fill="#f2f2f6"/><rect x="113" y="1242" width="1" height="1" fill="#181828"/><rect x="114" y="1242" width="5" height="1" fill="#2f7cc8"/><rect x="119" y="1242" width="1" height="1" fill="#181828"/><rect x="102" y="1243" width="1" height="1" fill="#d02838"/><rect x="103" y="1243" width="2" height="1" fill="#ffd428"/><rect x="105" y="1243" width="2" height="1" fill="#d02838"/><rect x="108" y="1243" width="1" height="1" fill="#f2f2f6"/><rect x="109" y="1243" width="1" height="1" fill="#8ab8e4"/><rect x="110" y="1243" width="2" height="1" fill="#f2f2f6"/><rect x="112" y="1243" width="2" height="1" fill="#181828"/><rect x="114" y="1243" width="5" height="1" fill="#2f7cc8"/><rect x="119" y="1243" width="1" height="1" fill="#181828"/><rect x="103" y="1244" width="1" height="1" fill="#d02838"/><rect x="104" y="1244" width="2" height="1" fill="#ffd428"/><rect x="106" y="1244" width="1" height="1" fill="#d02838"/><rect x="107" y="1244" width="1" height="1" fill="#181828"/><rect x="108" y="1244" width="1" height="1" fill="#f2f2f6"/><rect x="109" y="1244" width="1" height="1" fill="#181828"/><rect x="110" y="1244" width="2" height="1" fill="#f2f2f6"/><rect x="112" y="1244" width="2" height="1" fill="#181828"/><rect x="114" y="1244" width="1" height="1" fill="#2f7cc8"/><rect x="115" y="1244" width="1" height="1" fill="#8ab8e4"/><rect x="116" y="1244" width="3" height="1" fill="#2f7cc8"/><rect x="119" y="1244" width="1" height="1" fill="#181828"/><rect x="103" y="1245" width="2" height="1" fill="#d02838"/><rect x="105" y="1245" width="1" height="1" fill="#ffd428"/><rect x="106" y="1245" width="1" height="1" fill="#d02838"/><rect x="107" y="1245" width="2" height="1" fill="#181828"/><rect x="109" y="1245" width="2" height="1" fill="#f2f2f6"/><rect x="112" y="1245" width="2" height="1" fill="#181828"/><rect x="114" y="1245" width="5" height="1" fill="#2f7cc8"/><rect x="119" y="1245" width="1" height="1" fill="#181828"/><rect x="103" y="1246" width="3" height="1" fill="#d02838"/><rect x="106" y="1246" width="2" height="1" fill="#181828"/><rect x="108" y="1246" width="4" height="1" fill="#4a5878"/><rect x="112" y="1246" width="1" height="1" fill="#181828"/><rect x="115" y="1246" width="6" height="1" fill="#4a5878"/><rect x="104" y="1247" width="1" height="1" fill="#d02838"/><rect x="105" y="1247" width="9" height="1" fill="#4a5878"/><rect x="115" y="1247" width="5" height="1" fill="#4a5878"/><rect x="106" y="1248" width="7" height="1" fill="#4a5878"/><rect x="133" y="1241" width="2" height="1" fill="#181828"/><rect x="132" y="1242" width="1" height="1" fill="#181828"/><rect x="133" y="1242" width="2" height="1" fill="#a02850"/><rect x="135" y="1242" width="1" height="1" fill="#181828"/><rect x="136" y="1242" width="1" height="1" fill="#b8b0e8"/><rect x="132" y="1243" width="1" height="1" fill="#181828"/><rect x="133" y="1243" width="1" height="1" fill="#4a3090"/><rect x="134" y="1243" width="1" height="1" fill="#c07828"/><rect x="135" y="1243" width="1" height="1" fill="#a02850"/><rect x="136" y="1243" width="1" height="1" fill="#b8b0e8"/><rect x="132" y="1244" width="1" height="1" fill="#181828"/><rect x="133" y="1244" width="1" height="1" fill="#4a3090"/><rect x="134" y="1244" width="1" height="1" fill="#c07828"/><rect x="135" y="1244" width="1" height="1" fill="#28a070"/><rect x="136" y="1244" width="1" height="1" fill="#b8b0e8"/><rect x="132" y="1245" width="1" height="1" fill="#181828"/><rect x="133" y="1245" width="1" height="1" fill="#c07828"/><rect x="134" y="1245" width="2" height="1" fill="#28a070"/><rect x="136" y="1245" width="1" height="1" fill="#b8b0e8"/><rect x="132" y="1246" width="1" height="1" fill="#181828"/><rect x="133" y="1246" width="1" height="1" fill="#c07828"/><rect x="134" y="1246" width="1" height="1" fill="#28a070"/><rect x="135" y="1246" width="2" height="1" fill="#a8f0c8"/><rect x="130" y="1247" width="3" height="1" fill="#181828"/><rect x="133" y="1247" width="1" height="1" fill="#4a3090"/><rect x="134" y="1247" width="2" height="1" fill="#28a070"/><rect x="136" y="1247" width="1" height="1" fill="#181828"/><rect x="133" y="1248" width="1" height="1" fill="#181828"/><rect x="134" y="1248" width="2" height="1" fill="#20a030"/><rect x="136" y="1248" width="1" height="1" fill="#a8f0c8"/><rect x="133" y="1249" width="1" height="1" fill="#ffd428"/><rect x="134" y="1249" width="1" height="1" fill="#20a030"/><rect x="135" y="1249" width="1" height="1" fill="#c07828"/><rect x="136" y="1249" width="1" height="1" fill="#181828"/><rect x="133" y="1250" width="1" height="1" fill="#181828"/><rect x="134" y="1250" width="2" height="1" fill="#303868"/><rect x="136" y="1250" width="1" height="1" fill="#181828"/><rect x="133" y="1251" width="1" height="1" fill="#181828"/><rect x="134" y="1251" width="1" height="1" fill="#303868"/><rect x="135" y="1251" width="2" height="1" fill="#181828"/><rect x="133" y="1252" width="2" height="1" fill="#181828"/><rect x="136" y="1252" width="1" height="1" fill="#181828"/><rect x="133" y="1253" width="1" height="1" fill="#181828"/><rect x="136" y="1253" width="1" height="1" fill="#181828"/><rect x="132" y="1254" width="2" height="1" fill="#8a4818"/><rect x="136" y="1254" width="1" height="1" fill="#8a4818"/><rect x="132" y="1255" width="2" height="1" fill="#181828"/><rect x="136" y="1255" width="1" height="1" fill="#181828"/><rect x="111" y="1255" width="1" height="1" fill="#181828"/><rect x="110" y="1256" width="1" height="1" fill="#181828"/><rect x="111" y="1256" width="3" height="1" fill="#a02850"/><rect x="114" y="1256" width="1" height="1" fill="#181828"/><rect x="109" y="1257" width="1" height="1" fill="#181828"/><rect x="110" y="1257" width="1" height="1" fill="#a02850"/><rect x="111" y="1257" width="1" height="1" fill="#ffd428"/><rect x="112" y="1257" width="2" height="1" fill="#4a3090"/><rect x="114" y="1257" width="1" height="1" fill="#181828"/><rect x="108" y="1258" width="2" height="1" fill="#181828"/><rect x="110" y="1258" width="2" height="1" fill="#28a070"/><rect x="112" y="1258" width="2" height="1" fill="#4a3090"/><rect x="114" y="1258" width="1" height="1" fill="#181828"/><rect x="107" y="1259" width="1" height="1" fill="#181828"/><rect x="108" y="1259" width="2" height="1" fill="#4a3090"/><rect x="110" y="1259" width="1" height="1" fill="#181828"/><rect x="111" y="1259" width="1" height="1" fill="#28a070"/><rect x="112" y="1259" width="1" height="1" fill="#4a3090"/><rect x="113" y="1259" width="2" height="1" fill="#181828"/><rect x="107" y="1260" width="1" height="1" fill="#181828"/><rect x="108" y="1260" width="2" height="1" fill="#4a3090"/><rect x="110" y="1260" width="1" height="1" fill="#181828"/><rect x="111" y="1260" width="1" height="1" fill="#28a070"/><rect x="112" y="1260" width="2" height="1" fill="#4a3090"/><rect x="114" y="1260" width="1" height="1" fill="#181828"/><rect x="107" y="1261" width="2" height="1" fill="#181828"/><rect x="109" y="1261" width="1" height="1" fill="#4a3090"/><rect x="110" y="1261" width="1" height="1" fill="#181828"/><rect x="111" y="1261" width="1" height="1" fill="#a8f0c8"/><rect x="112" y="1261" width="1" height="1" fill="#28a070"/><rect x="113" y="1261" width="1" height="1" fill="#181828"/><rect x="108" y="1262" width="3" height="1" fill="#181828"/><rect x="111" y="1262" width="2" height="1" fill="#20a030"/><rect x="113" y="1262" width="1" height="1" fill="#181828"/><rect x="110" y="1263" width="1" height="1" fill="#181828"/><rect x="111" y="1263" width="2" height="1" fill="#ffd428"/><rect x="113" y="1263" width="1" height="1" fill="#20a030"/><rect x="114" y="1263" width="1" height="1" fill="#181828"/><rect x="110" y="1264" width="1" height="1" fill="#181828"/><rect x="111" y="1264" width="2" height="1" fill="#2f7cc8"/><rect x="113" y="1264" width="1" height="1" fill="#303868"/><rect x="114" y="1264" width="1" height="1" fill="#181828"/><rect x="110" y="1265" width="1" height="1" fill="#181828"/><rect x="111" y="1265" width="2" height="1" fill="#4a3090"/><rect x="113" y="1265" width="1" height="1" fill="#181828"/><rect x="110" y="1266" width="1" height="1" fill="#8a4818"/><rect x="111" y="1266" width="3" height="1" fill="#181828"/><rect x="109" y="1267" width="2" height="1" fill="#8a4818"/><rect x="113" y="1267" width="1" height="1" fill="#181828"/><rect x="108" y="1268" width="3" height="1" fill="#181828"/><rect x="113" y="1268" width="2" height="1" fill="#181828"/><rect x="122" y="1255" width="2" height="1" fill="#181828"/><rect x="121" y="1256" width="1" height="1" fill="#181828"/><rect x="122" y="1256" width="3" height="1" fill="#a02850"/><rect x="125" y="1256" width="1" height="1" fill="#181828"/><rect x="120" y="1257" width="2" height="1" fill="#181828"/><rect x="122" y="1257" width="2" height="1" fill="#c07828"/><rect x="124" y="1257" width="1" height="1" fill="#b8b0e8"/><rect x="125" y="1257" width="1" height="1" fill="#c07828"/><rect x="126" y="1257" width="1" height="1" fill="#181828"/><rect x="120" y="1258" width="1" height="1" fill="#181828"/><rect x="121" y="1258" width="3" height="1" fill="#c07828"/><rect x="124" y="1258" width="1" height="1" fill="#28a070"/><rect x="125" y="1258" width="1" height="1" fill="#4a3090"/><rect x="126" y="1258" width="1" height="1" fill="#181828"/><rect x="120" y="1259" width="1" height="1" fill="#181828"/><rect x="121" y="1259" width="1" height="1" fill="#c07828"/><rect x="122" y="1259" width="1" height="1" fill="#181828"/><rect x="123" y="1259" width="1" height="1" fill="#c07828"/><rect x="124" y="1259" width="2" height="1" fill="#4a3090"/><rect x="126" y="1259" width="1" height="1" fill="#181828"/><rect x="120" y="1260" width="1" height="1" fill="#181828"/><rect x="121" y="1260" width="1" height="1" fill="#c07828"/><rect x="122" y="1260" width="2" height="1" fill="#28a070"/><rect x="124" y="1260" width="1" height="1" fill="#4a3090"/><rect x="125" y="1260" width="2" height="1" fill="#181828"/><rect x="120" y="1261" width="1" height="1" fill="#181828"/><rect x="121" y="1261" width="1" height="1" fill="#c07828"/><rect x="122" y="1261" width="2" height="1" fill="#28a070"/><rect x="124" y="1261" width="1" height="1" fill="#181828"/><rect x="125" y="1261" width="1" height="1" fill="#4a3090"/><rect x="126" y="1261" width="1" height="1" fill="#181828"/><rect x="120" y="1262" width="6" height="1" fill="#181828"/><rect x="126" y="1262" width="1" height="1" fill="#8a4818"/><rect x="121" y="1263" width="1" height="1" fill="#ffd428"/><rect x="122" y="1263" width="3" height="1" fill="#181828"/><rect x="125" y="1263" width="1" height="1" fill="#ffd428"/><rect x="126" y="1263" width="1" height="1" fill="#181828"/><rect x="121" y="1264" width="1" height="1" fill="#181828"/><rect x="122" y="1264" width="3" height="1" fill="#ffd428"/><rect x="125" y="1264" width="1" height="1" fill="#181828"/><rect x="121" y="1265" width="1" height="1" fill="#181828"/><rect x="122" y="1265" width="3" height="1" fill="#4a3090"/><rect x="125" y="1265" width="1" height="1" fill="#181828"/><rect x="121" y="1266" width="1" height="1" fill="#8a4818"/><rect x="122" y="1266" width="3" height="1" fill="#181828"/><rect x="125" y="1266" width="1" height="1" fill="#8a4818"/><rect x="121" y="1267" width="1" height="1" fill="#8a4818"/><rect x="125" y="1267" width="1" height="1" fill="#8a4818"/><rect x="121" y="1268" width="2" height="1" fill="#8a4818"/><rect x="125" y="1268" width="2" height="1" fill="#8a4818"/><rect x="121" y="1269" width="1" height="1" fill="#181828"/><rect x="125" y="1269" width="2" height="1" fill="#181828"/><rect x="102" y="1374" width="2" height="1" fill="#f2f2f6"/><rect x="105" y="1374" width="3" height="1" fill="#f2f2f6"/><rect x="101" y="1375" width="1" height="1" fill="#f2f2f6"/><rect x="102" y="1375" width="1" height="1" fill="#d02838"/><rect x="103" y="1375" width="1" height="1" fill="#f2f2f6"/><rect x="105" y="1375" width="3" height="1" fill="#f2f2f6"/><rect x="96" y="1376" width="1" height="1" fill="#181828"/><rect x="97" y="1376" width="3" height="1" fill="#f2f2f6"/><rect x="100" y="1376" width="2" height="1" fill="#d02838"/><rect x="102" y="1376" width="6" height="1" fill="#f2f2f6"/><rect x="95" y="1377" width="4" height="1" fill="#f2f2f6"/><rect x="99" y="1377" width="4" height="1" fill="#d02838"/><rect x="103" y="1377" width="2" height="1" fill="#f2f2f6"/><rect x="105" y="1377" width="1" height="1" fill="#181828"/><rect x="106" y="1377" width="2" height="1" fill="#f2f2f6"/><rect x="108" y="1377" width="2" height="1" fill="#181828"/><rect x="95" y="1378" width="4" height="1" fill="#f2f2f6"/><rect x="99" y="1378" width="5" height="1" fill="#d02838"/><rect x="104" y="1378" width="2" height="1" fill="#f2f2f6"/><rect x="106" y="1378" width="2" height="1" fill="#2f7cc8"/><rect x="108" y="1378" width="2" height="1" fill="#f2f2f6"/><rect x="95" y="1379" width="4" height="1" fill="#f2f2f6"/><rect x="99" y="1379" width="5" height="1" fill="#d02838"/><rect x="104" y="1379" width="2" height="1" fill="#f2f2f6"/><rect x="106" y="1379" width="2" height="1" fill="#2f7cc8"/><rect x="108" y="1379" width="2" height="1" fill="#f2f2f6"/><rect x="95" y="1380" width="3" height="1" fill="#f2f2f6"/><rect x="99" y="1380" width="4" height="1" fill="#d02838"/><rect x="103" y="1380" width="3" height="1" fill="#f2f2f6"/><rect x="106" y="1380" width="2" height="1" fill="#181828"/><rect x="108" y="1380" width="2" height="1" fill="#f2f2f6"/><rect x="95" y="1381" width="1" height="1" fill="#181828"/><rect x="96" y="1381" width="8" height="1" fill="#f2f2f6"/><rect x="104" y="1381" width="2" height="1" fill="#181828"/><rect x="106" y="1381" width="4" height="1" fill="#f2f2f6"/><rect x="94" y="1382" width="3" height="1" fill="#d02838"/><rect x="97" y="1382" width="1" height="1" fill="#181828"/><rect x="98" y="1382" width="7" height="1" fill="#f2f2f6"/><rect x="105" y="1382" width="2" height="1" fill="#181828"/><rect x="107" y="1382" width="2" height="1" fill="#f2f2f6"/><rect x="93" y="1383" width="4" height="1" fill="#d02838"/><rect x="97" y="1383" width="1" height="1" fill="#ffd428"/><rect x="98" y="1383" width="1" height="1" fill="#181828"/><rect x="99" y="1383" width="5" height="1" fill="#f2f2f6"/><rect x="104" y="1383" width="1" height="1" fill="#a01828"/><rect x="93" y="1384" width="2" height="1" fill="#d02838"/><rect x="95" y="1384" width="2" height="1" fill="#ffd428"/><rect x="97" y="1384" width="1" height="1" fill="#d02838"/><rect x="98" y="1384" width="1" height="1" fill="#181828"/><rect x="99" y="1384" width="5" height="1" fill="#f2f2f6"/><rect x="104" y="1384" width="1" height="1" fill="#181828"/><rect x="106" y="1384" width="3" height="1" fill="#2f7cc8"/><rect x="109" y="1384" width="2" height="1" fill="#c07828"/><rect x="93" y="1385" width="2" height="1" fill="#d02838"/><rect x="95" y="1385" width="1" height="1" fill="#ffd428"/><rect x="96" y="1385" width="2" height="1" fill="#d02838"/><rect x="98" y="1385" width="1" height="1" fill="#181828"/><rect x="99" y="1385" width="1" height="1" fill="#f2f2f6"/><rect x="100" y="1385" width="1" height="1" fill="#8ab8e4"/><rect x="101" y="1385" width="3" height="1" fill="#f2f2f6"/><rect x="104" y="1385" width="1" height="1" fill="#181828"/><rect x="105" y="1385" width="5" height="1" fill="#2f7cc8"/><rect x="110" y="1385" width="1" height="1" fill="#181828"/><rect x="93" y="1386" width="1" height="1" fill="#d02838"/><rect x="94" y="1386" width="2" height="1" fill="#ffd428"/><rect x="96" y="1386" width="2" height="1" fill="#d02838"/><rect x="99" y="1386" width="1" height="1" fill="#f2f2f6"/><rect x="100" y="1386" width="1" height="1" fill="#8ab8e4"/><rect x="101" y="1386" width="2" height="1" fill="#f2f2f6"/><rect x="103" y="1386" width="2" height="1" fill="#181828"/><rect x="105" y="1386" width="5" height="1" fill="#2f7cc8"/><rect x="110" y="1386" width="1" height="1" fill="#181828"/><rect x="94" y="1387" width="1" height="1" fill="#d02838"/><rect x="95" y="1387" width="2" height="1" fill="#ffd428"/><rect x="97" y="1387" width="1" height="1" fill="#d02838"/><rect x="98" y="1387" width="1" height="1" fill="#181828"/><rect x="99" y="1387" width="1" height="1" fill="#f2f2f6"/><rect x="100" y="1387" width="1" height="1" fill="#181828"/><rect x="101" y="1387" width="2" height="1" fill="#f2f2f6"/><rect x="103" y="1387" width="2" height="1" fill="#181828"/><rect x="105" y="1387" width="1" height="1" fill="#2f7cc8"/><rect x="106" y="1387" width="1" height="1" fill="#8ab8e4"/><rect x="107" y="1387" width="3" height="1" fill="#2f7cc8"/><rect x="110" y="1387" width="1" height="1" fill="#181828"/><rect x="94" y="1388" width="2" height="1" fill="#d02838"/><rect x="96" y="1388" width="1" height="1" fill="#ffd428"/><rect x="97" y="1388" width="1" height="1" fill="#d02838"/><rect x="98" y="1388" width="2" height="1" fill="#181828"/><rect x="100" y="1388" width="2" height="1" fill="#f2f2f6"/><rect x="103" y="1388" width="2" height="1" fill="#181828"/><rect x="105" y="1388" width="5" height="1" fill="#2f7cc8"/><rect x="110" y="1388" width="1" height="1" fill="#181828"/><rect x="94" y="1389" width="3" height="1" fill="#d02838"/><rect x="97" y="1389" width="2" height="1" fill="#181828"/><rect x="99" y="1389" width="4" height="1" fill="#4a5878"/><rect x="103" y="1389" width="1" height="1" fill="#181828"/><rect x="106" y="1389" width="6" height="1" fill="#4a5878"/><rect x="95" y="1390" width="1" height="1" fill="#d02838"/><rect x="96" y="1390" width="9" height="1" fill="#4a5878"/><rect x="106" y="1390" width="5" height="1" fill="#4a5878"/><rect x="97" y="1391" width="7" height="1" fill="#4a5878"/><rect x="124" y="1384" width="2" height="1" fill="#181828"/><rect x="123" y="1385" width="1" height="1" fill="#181828"/><rect x="124" y="1385" width="2" height="1" fill="#a02850"/><rect x="126" y="1385" width="1" height="1" fill="#181828"/><rect x="127" y="1385" width="1" height="1" fill="#b8b0e8"/><rect x="123" y="1386" width="1" height="1" fill="#181828"/><rect x="124" y="1386" width="1" height="1" fill="#4a3090"/><rect x="125" y="1386" width="1" height="1" fill="#c07828"/><rect x="126" y="1386" width="1" height="1" fill="#a02850"/><rect x="127" y="1386" width="1" height="1" fill="#b8b0e8"/><rect x="123" y="1387" width="1" height="1" fill="#181828"/><rect x="124" y="1387" width="1" height="1" fill="#4a3090"/><rect x="125" y="1387" width="1" height="1" fill="#c07828"/><rect x="126" y="1387" width="1" height="1" fill="#28a070"/><rect x="127" y="1387" width="1" height="1" fill="#b8b0e8"/><rect x="123" y="1388" width="1" height="1" fill="#181828"/><rect x="124" y="1388" width="1" height="1" fill="#c07828"/><rect x="125" y="1388" width="2" height="1" fill="#28a070"/><rect x="127" y="1388" width="1" height="1" fill="#b8b0e8"/><rect x="123" y="1389" width="1" height="1" fill="#181828"/><rect x="124" y="1389" width="1" height="1" fill="#c07828"/><rect x="125" y="1389" width="1" height="1" fill="#28a070"/><rect x="126" y="1389" width="2" height="1" fill="#a8f0c8"/><rect x="121" y="1390" width="3" height="1" fill="#181828"/><rect x="124" y="1390" width="1" height="1" fill="#4a3090"/><rect x="125" y="1390" width="2" height="1" fill="#28a070"/><rect x="127" y="1390" width="1" height="1" fill="#181828"/><rect x="124" y="1391" width="1" height="1" fill="#181828"/><rect x="125" y="1391" width="2" height="1" fill="#20a030"/><rect x="127" y="1391" width="1" height="1" fill="#a8f0c8"/><rect x="124" y="1392" width="1" height="1" fill="#ffd428"/><rect x="125" y="1392" width="1" height="1" fill="#20a030"/><rect x="126" y="1392" width="1" height="1" fill="#c07828"/><rect x="127" y="1392" width="1" height="1" fill="#181828"/><rect x="124" y="1393" width="1" height="1" fill="#181828"/><rect x="125" y="1393" width="2" height="1" fill="#303868"/><rect x="127" y="1393" width="1" height="1" fill="#181828"/><rect x="124" y="1394" width="1" height="1" fill="#181828"/><rect x="125" y="1394" width="1" height="1" fill="#303868"/><rect x="126" y="1394" width="2" height="1" fill="#181828"/><rect x="124" y="1395" width="2" height="1" fill="#181828"/><rect x="127" y="1395" width="1" height="1" fill="#181828"/><rect x="124" y="1396" width="1" height="1" fill="#181828"/><rect x="127" y="1396" width="1" height="1" fill="#181828"/><rect x="123" y="1397" width="2" height="1" fill="#8a4818"/><rect x="127" y="1397" width="1" height="1" fill="#8a4818"/><rect x="123" y="1398" width="2" height="1" fill="#181828"/><rect x="127" y="1398" width="1" height="1" fill="#181828"/><rect x="102" y="1398" width="1" height="1" fill="#181828"/><rect x="101" y="1399" width="1" height="1" fill="#181828"/><rect x="102" y="1399" width="3" height="1" fill="#a02850"/><rect x="105" y="1399" width="1" height="1" fill="#181828"/><rect x="100" y="1400" width="1" height="1" fill="#181828"/><rect x="101" y="1400" width="1" height="1" fill="#a02850"/><rect x="102" y="1400" width="1" height="1" fill="#ffd428"/><rect x="103" y="1400" width="2" height="1" fill="#4a3090"/><rect x="105" y="1400" width="1" height="1" fill="#181828"/><rect x="99" y="1401" width="2" height="1" fill="#181828"/><rect x="101" y="1401" width="2" height="1" fill="#28a070"/><rect x="103" y="1401" width="2" height="1" fill="#4a3090"/><rect x="105" y="1401" width="1" height="1" fill="#181828"/><rect x="98" y="1402" width="1" height="1" fill="#181828"/><rect x="99" y="1402" width="2" height="1" fill="#4a3090"/><rect x="101" y="1402" width="1" height="1" fill="#181828"/><rect x="102" y="1402" width="1" height="1" fill="#28a070"/><rect x="103" y="1402" width="1" height="1" fill="#4a3090"/><rect x="104" y="1402" width="2" height="1" fill="#181828"/><rect x="98" y="1403" width="1" height="1" fill="#181828"/><rect x="99" y="1403" width="2" height="1" fill="#4a3090"/><rect x="101" y="1403" width="1" height="1" fill="#181828"/><rect x="102" y="1403" width="1" height="1" fill="#28a070"/><rect x="103" y="1403" width="2" height="1" fill="#4a3090"/><rect x="105" y="1403" width="1" height="1" fill="#181828"/><rect x="98" y="1404" width="2" height="1" fill="#181828"/><rect x="100" y="1404" width="1" height="1" fill="#4a3090"/><rect x="101" y="1404" width="1" height="1" fill="#181828"/><rect x="102" y="1404" width="1" height="1" fill="#a8f0c8"/><rect x="103" y="1404" width="1" height="1" fill="#28a070"/><rect x="104" y="1404" width="1" height="1" fill="#181828"/><rect x="99" y="1405" width="3" height="1" fill="#181828"/><rect x="102" y="1405" width="2" height="1" fill="#20a030"/><rect x="104" y="1405" width="1" height="1" fill="#181828"/><rect x="101" y="1406" width="1" height="1" fill="#181828"/><rect x="102" y="1406" width="2" height="1" fill="#ffd428"/><rect x="104" y="1406" width="1" height="1" fill="#20a030"/><rect x="105" y="1406" width="1" height="1" fill="#181828"/><rect x="101" y="1407" width="1" height="1" fill="#181828"/><rect x="102" y="1407" width="2" height="1" fill="#2f7cc8"/><rect x="104" y="1407" width="1" height="1" fill="#303868"/><rect x="105" y="1407" width="1" height="1" fill="#181828"/><rect x="101" y="1408" width="1" height="1" fill="#181828"/><rect x="102" y="1408" width="2" height="1" fill="#4a3090"/><rect x="104" y="1408" width="1" height="1" fill="#181828"/><rect x="101" y="1409" width="1" height="1" fill="#8a4818"/><rect x="102" y="1409" width="3" height="1" fill="#181828"/><rect x="100" y="1410" width="2" height="1" fill="#8a4818"/><rect x="104" y="1410" width="1" height="1" fill="#181828"/><rect x="99" y="1411" width="3" height="1" fill="#181828"/><rect x="104" y="1411" width="2" height="1" fill="#181828"/><rect x="113" y="1398" width="2" height="1" fill="#181828"/><rect x="112" y="1399" width="1" height="1" fill="#181828"/><rect x="113" y="1399" width="3" height="1" fill="#a02850"/><rect x="116" y="1399" width="1" height="1" fill="#181828"/><rect x="111" y="1400" width="2" height="1" fill="#181828"/><rect x="113" y="1400" width="2" height="1" fill="#c07828"/><rect x="115" y="1400" width="1" height="1" fill="#b8b0e8"/><rect x="116" y="1400" width="1" height="1" fill="#c07828"/><rect x="117" y="1400" width="1" height="1" fill="#181828"/><rect x="111" y="1401" width="1" height="1" fill="#181828"/><rect x="112" y="1401" width="3" height="1" fill="#c07828"/><rect x="115" y="1401" width="1" height="1" fill="#28a070"/><rect x="116" y="1401" width="1" height="1" fill="#4a3090"/><rect x="117" y="1401" width="1" height="1" fill="#181828"/><rect x="111" y="1402" width="1" height="1" fill="#181828"/><rect x="112" y="1402" width="1" height="1" fill="#c07828"/><rect x="113" y="1402" width="1" height="1" fill="#181828"/><rect x="114" y="1402" width="1" height="1" fill="#c07828"/><rect x="115" y="1402" width="2" height="1" fill="#4a3090"/><rect x="117" y="1402" width="1" height="1" fill="#181828"/><rect x="111" y="1403" width="1" height="1" fill="#181828"/><rect x="112" y="1403" width="1" height="1" fill="#c07828"/><rect x="113" y="1403" width="2" height="1" fill="#28a070"/><rect x="115" y="1403" width="1" height="1" fill="#4a3090"/><rect x="116" y="1403" width="2" height="1" fill="#181828"/><rect x="111" y="1404" width="1" height="1" fill="#181828"/><rect x="112" y="1404" width="1" height="1" fill="#c07828"/><rect x="113" y="1404" width="2" height="1" fill="#28a070"/><rect x="115" y="1404" width="1" height="1" fill="#181828"/><rect x="116" y="1404" width="1" height="1" fill="#4a3090"/><rect x="117" y="1404" width="1" height="1" fill="#181828"/><rect x="111" y="1405" width="6" height="1" fill="#181828"/><rect x="117" y="1405" width="1" height="1" fill="#8a4818"/><rect x="112" y="1406" width="1" height="1" fill="#ffd428"/><rect x="113" y="1406" width="3" height="1" fill="#181828"/><rect x="116" y="1406" width="1" height="1" fill="#ffd428"/><rect x="117" y="1406" width="1" height="1" fill="#181828"/><rect x="112" y="1407" width="1" height="1" fill="#181828"/><rect x="113" y="1407" width="3" height="1" fill="#ffd428"/><rect x="116" y="1407" width="1" height="1" fill="#181828"/><rect x="112" y="1408" width="1" height="1" fill="#181828"/><rect x="113" y="1408" width="3" height="1" fill="#4a3090"/><rect x="116" y="1408" width="1" height="1" fill="#181828"/><rect x="112" y="1409" width="1" height="1" fill="#8a4818"/><rect x="113" y="1409" width="3" height="1" fill="#181828"/><rect x="116" y="1409" width="1" height="1" fill="#8a4818"/><rect x="112" y="1410" width="1" height="1" fill="#8a4818"/><rect x="116" y="1410" width="1" height="1" fill="#8a4818"/><rect x="112" y="1411" width="2" height="1" fill="#8a4818"/><rect x="116" y="1411" width="2" height="1" fill="#8a4818"/><rect x="112" y="1412" width="1" height="1" fill="#181828"/><rect x="116" y="1412" width="2" height="1" fill="#181828"/></g>
</svg>

<div class="nav">
<svg width="720" height="84" viewBox="0 1436 720 84">
<path d="M178 1465.5 L178 1491 L156 1478.2 Z" fill="#999" stroke="#999" stroke-width="2.5" stroke-linejoin="round"/>
<circle cx="360" cy="1478.2" r="22.9" fill="none" stroke="#999" stroke-width="2.2"/>
<circle cx="360" cy="1478.2" r="12.3" fill="#999"/>
<rect x="537.2" y="1465" width="26.6" height="26.6" rx="3.5" fill="#999"/>
</svg>
</div>
</body>
</html>
